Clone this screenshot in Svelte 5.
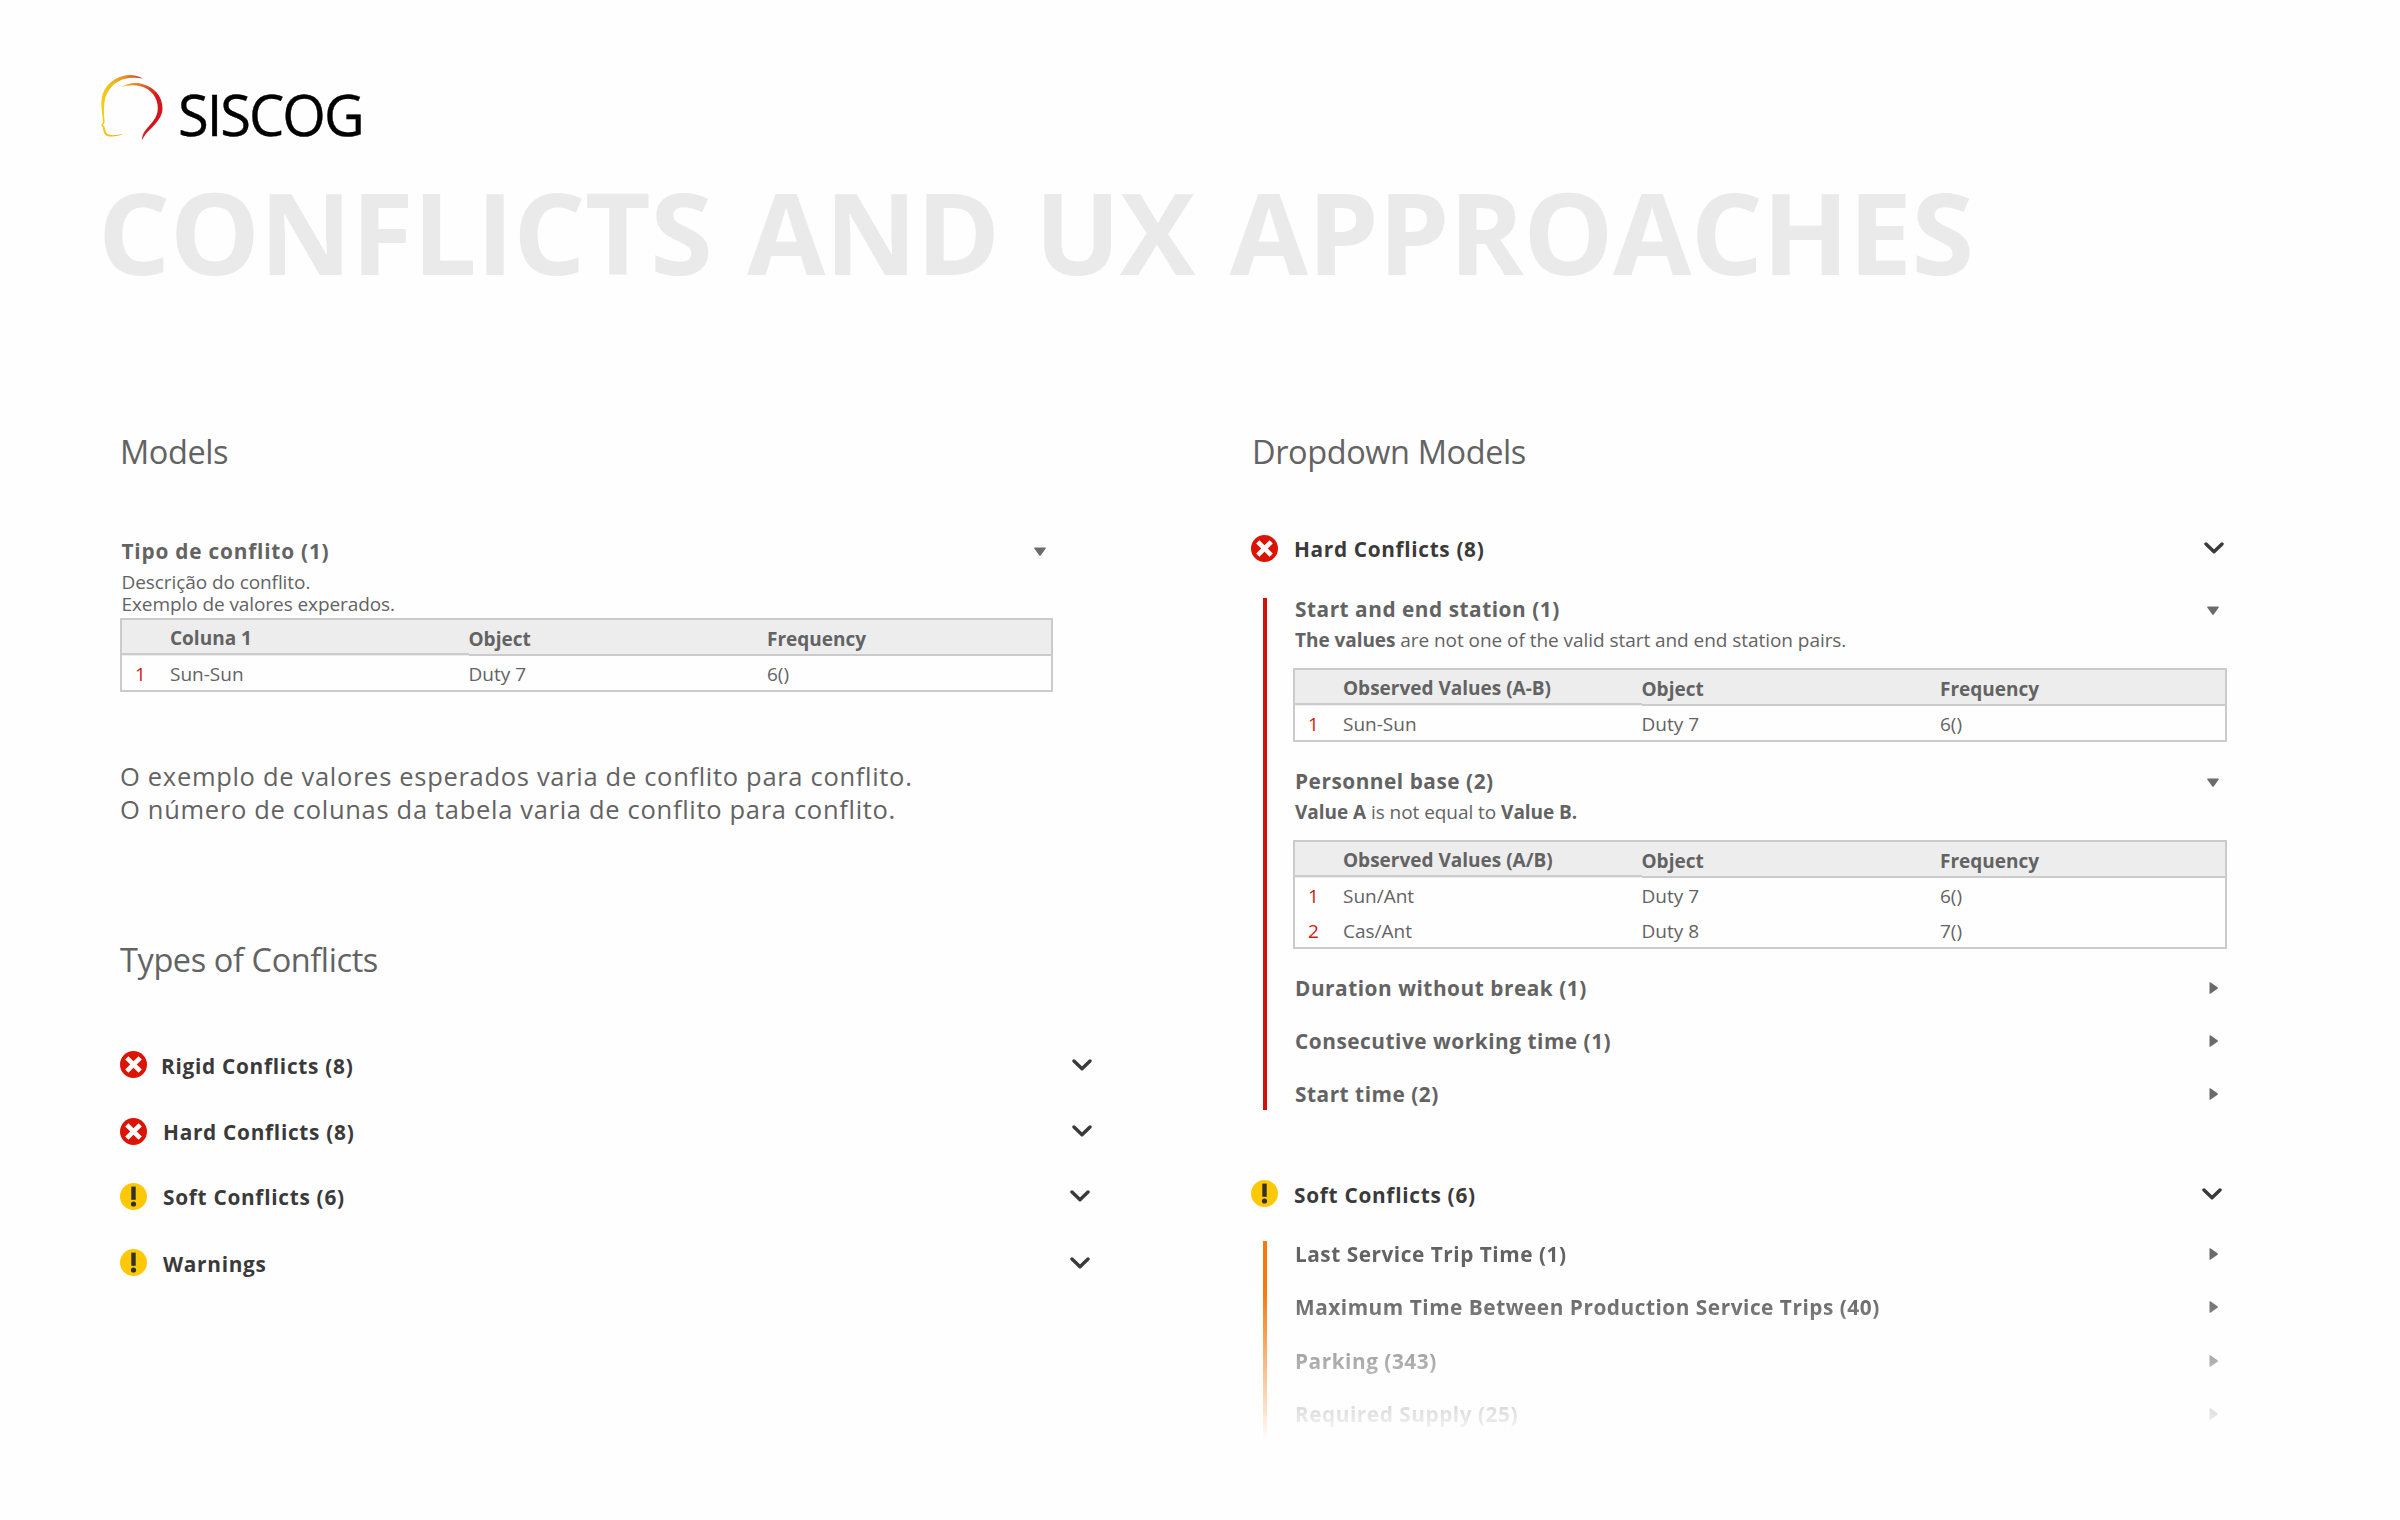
<script>
  const frequencyCols = (first) => [first, "Object", "Frequency"];

  const model = {
    columns: frequencyCols("Coluna 1"),
    rows: [["Sun-Sun", "Duty 7", "6()"]],
  };

  const types = [
    { kind: "error", name: "Rigid Conflicts (8)", tight: true },
    { kind: "error", name: "Hard Conflicts (8)" },
    { kind: "warning", name: "Soft Conflicts (6)" },
    { kind: "warning", name: "Warnings" },
  ];

  const groups = [
    {
      kind: "error",
      name: "Hard Conflicts (8)",
      items: [
        {
          name: "Start and end station (1)",
          text: [
            { b: true, t: "The values" },
            { t: " are not one of the valid start and end station pairs." },
          ],
          table: {
            columns: frequencyCols("Observed Values (A-B)"),
            rows: [["Sun-Sun", "Duty 7", "6()"]],
          },
        },
        {
          name: "Personnel base (2)",
          text: [
            { b: true, t: "Value A" },
            { t: " is not equal to " },
            { b: true, t: "Value B." },
          ],
          table: {
            columns: frequencyCols("Observed Values (A/B)"),
            rows: [
              ["Sun/Ant", "Duty 7", "6()"],
              ["Cas/Ant", "Duty 8", "7()"],
            ],
          },
        },
        { name: "Duration without break (1)" },
        { name: "Consecutive working time (1)" },
        { name: "Start time (2)" },
      ],
    },
    {
      kind: "warning",
      name: "Soft Conflicts (6)",
      items: [
        { name: "Last Service Trip Time (1)" },
        { name: "Maximum Time Between Production Service Trips (40)" },
        { name: "Parking (343)" },
        { name: "Required Supply (25)" },
      ],
    },
  ];
</script>

{#snippet badge(kind)}
  <svg class="badge" viewBox="0 0 27 27">
    {#if kind === "error"}
      <circle cx="13.5" cy="13.5" r="13.5" fill="#dc1405" />
      <path d="M6.8 6.8L20.2 20.2M20.2 6.8L6.8 20.2" stroke="#fff" stroke-width="4.6" />
    {:else}
      <circle cx="13.5" cy="13.5" r="13.5" fill="#fdc806" />
      <rect x="11.3" y="3.6" width="4.4" height="13.2" fill="#33322a" />
      <circle cx="13.5" cy="21" r="2.6" fill="#33322a" />
    {/if}
  </svg>
{/snippet}

{#snippet chevron()}
  <svg class="chevron" viewBox="0 0 20 12">
    <path d="M2 2L10 9.8L18 2" />
  </svg>
{/snippet}

{#snippet caret(open)}
  <svg class="caret" class:open viewBox="0 0 12 12">
    {#if open}
      <path d="M.8 1.6H11.2Q12.2 1.6 11.7 2.5L6.7 9.6Q6 10.5 5.3 9.6L.3 2.5Q-.2 1.6 .8 1.6Z" />
    {:else}
      <path d="M2.5 .8V11.2Q2.5 12.2 3.4 11.7L10.5 6.7Q11.4 6 10.5 5.3L3.4 .3Q2.5 -.2 2.5 .8Z" />
    {/if}
  </svg>
{/snippet}

{#snippet table(data)}
  <div class="table">
    <div class="row head">
      <span class="first"></span>
      {#each data.columns as col, i}
        <span class:first={i === 0}>{col}</span>
      {/each}
    </div>
    {#each data.rows as row, i}
      <div class="row">
        <span class="num">{i + 1}</span>
        {#each row as cell}
          <span>{cell}</span>
        {/each}
      </div>
    {/each}
  </div>
{/snippet}

<div class="page">
  <header>
    <div class="logo">
      <svg class="logo-mark" viewBox="0 0 62 66">
        <defs>
          <linearGradient id="face" x1="0" y1="0" x2="1" y2="0">
            <stop offset="0" stop-color="#f3cf10" />
            <stop offset="0.3" stop-color="#f0b41c" />
            <stop offset="0.7" stop-color="#e0752a" />
            <stop offset="1" stop-color="#cf2a25" />
          </linearGradient>
          <linearGradient id="hair" x1="0" y1="0" x2="1" y2="0.35">
            <stop offset="0" stop-color="#efc51c" />
            <stop offset="0.45" stop-color="#e0702a" />
            <stop offset="0.85" stop-color="#d5151e" />
            <stop offset="1" stop-color="#d5151e" />
          </linearGradient>
        </defs>
        <path
          fill="url(#face)"
          d="M42 3.6C36 .2 29 -.8 22 1C9 4.6 .8 14 .4 27C.2 34 1.4 40 2.2 46.4C1.8 48.5 .2 49.4 .4 50.4C.6 51.4 1.8 51.7 1.8 52.6C2.3 55 2.3 57 4 59.4C6.5 62.4 15 62 22.4 58.8C16 60.3 9 61 6 58.6C4 56.5 4.5 54 3.4 51.6C2.8 50.6 1.8 50.4 2.1 49.7C3 48.5 4 47.5 3.5 45C2.7 39 2.8 33 3.4 27.5C5 15.5 13 6.6 24 3.8C30 2.4 36 2.4 42 3.6Z"
        />
        <path
          fill="url(#hair)"
          d="M19.5 12.6C25 9 32 7 39 8.4C53 11.3 61.8 21 61.5 34C61.2 42 55 48.5 49 54.5C45 58.5 43 61 41.2 65.2C40.6 62 42 58 45 54.5C50 48.5 56.6 43 56.8 33.5C57 22.5 50 14 39.5 11.2C32 9.5 25 10.5 19.5 12.6Z"
        />
      </svg>
      <span class="logo-name">SISCOG</span>
    </div>
    <h1>CONFLICTS AND UX APPROACHES</h1>
  </header>

  <main>
    <section class="left">
      <h2>Models</h2>
      <div class="model">
        <div class="item-title">
          <span>Tipo de conflito (1)</span>
          {@render caret(true)}
        </div>
        <p class="desc">Descrição do conflito.<br />Exemplo de valores experados.</p>
        {@render table(model)}
      </div>

      <p class="note">
        O exemplo de valores esperados varia de conflito para conflito.<br />
        O número de colunas da tabela varia de conflito para conflito.
      </p>

      <h2>Types of Conflicts</h2>
      <div class="types">
        {#each types as type}
          <div class="group-title {type.kind}" class:tight={type.tight}>
            {@render badge(type.kind)}
            <span>{type.name}</span>
            {@render chevron()}
          </div>
        {/each}
      </div>
    </section>

    <section class="right">
      <h2>Dropdown Models</h2>
      {#each groups as group}
        <div class="group {group.kind}">
          <div class="group-title {group.kind}">
            {@render badge(group.kind)}
            <span>{group.name}</span>
            {@render chevron()}
          </div>
          <div class="group-body">
            <div class="line"></div>
            <div class="items">
              {#each group.items as item}
                <div class="item" class:expanded={item.table}>
                  <div class="item-title">
                    <span>{item.name}</span>
                    {@render caret(!!item.table)}
                  </div>
                  {#if item.table}
                    <p class="desc">
                      {#each item.text as part}{#if part.b}<b>{part.t}</b>{:else}{part.t}{/if}{/each}
                    </p>
                    {@render table(item.table)}
                  {/if}
                </div>
              {/each}
            </div>
          </div>
        </div>
      {/each}
    </section>
  </main>
</div>

<style>
  :global(body) {
    background: #fefefe;
  }

  .page {
    width: 2400px;
    height: 1520px;
    box-sizing: border-box;
    padding: 75px 0 0 101px;
    overflow: hidden;
    font-family: "Open Sans", "Noto Sans", sans-serif;
    color: #636363;
  }

  h1,
  h2,
  p {
    margin: 0;
  }

  .logo {
    display: flex;
    height: 66px;
  }
  .logo-mark {
    width: 62px;
    height: 66px;
  }
  .logo-name {
    margin: 9px 0 0 15px;
    font-size: 56px;
    line-height: 60px;
    letter-spacing: -2px;
    color: #000;
    -webkit-text-stroke: 0.4px #000;
  }

  h1 {
    margin: 30px 0 0 -3px;
    font-size: 113.5px;
    line-height: 120px;
    font-weight: 700;
    letter-spacing: -0.6px;
    word-spacing: 6px;
    color: #eaeaea;
    white-space: nowrap;
  }

  main {
    display: grid;
    grid-template-columns: 1132px 976px;
    margin: 138px 0 0 19px;
  }

  h2 {
    font-size: 32.5px;
    line-height: 45px;
    height: 44px;
    font-weight: 400;
    letter-spacing: -0.4px;
  }

  .model {
    width: 933px;
    margin-top: 63px;
  }
  .model .item-title {
    line-height: 28px;
    height: 28px;
    padding-right: 7px;
    letter-spacing: 0.8px;
  }
  .model .item-title span {
    padding-top: 2px;
  }
  .model .desc {
    margin-top: 6.5px;
    letter-spacing: -0.08px;
  }
  .model .table {
    margin-top: 2.5px;
  }
  .model .item-title span,
  .model .desc {
    margin-left: 1.5px;
  }

  .item-title {
    display: flex;
    align-items: center;
    justify-content: space-between;
    padding-right: 8px;
    font-size: 20.8px;
    line-height: 22px;
    font-weight: 700;
    letter-spacing: 0.53px;
  }

  .desc {
    font-size: 19px;
    line-height: 22.3px;
    letter-spacing: -0.05px;
    white-space: nowrap;
  }
  .item .item-title span,
  .item .desc {
    margin-left: 2px;
  }

  .caret {
    width: 12px;
    height: 12px;
    fill: #6b6b6b;
  }
  .caret.open {
    position: relative;
    top: 2px;
  }

  .table {
    border: 2px solid #cbcbcb;
    font-size: 19px;
  }
  .row {
    display: grid;
    grid-template-columns: 48px 298.5px 298.5px 1fr;
    line-height: 37px;
    height: 35px;
  }
  .row:last-child {
    height: 34px;
  }
  .head {
    background: #ededed;
    font-weight: 700;
    line-height: 38px;
    height: 36px;
  }
  .head span {
    box-sizing: border-box;
    height: 36px;
    border-bottom: 2px solid #cbcbcb;
  }
  .head .first {
    height: 35px;
    line-height: 37px;
  }
  .num {
    padding-left: 13px;
    color: #d31a10;
  }

  .note {
    margin-top: 68px;
    font-size: 25.5px;
    line-height: 33.3px;
    letter-spacing: 0.69px;
    white-space: nowrap;
  }
  .note + h2 {
    margin-top: 110.5px;
  }

  .types {
    display: grid;
    grid-template-rows: 66.5px 65px 66.5px 28px;
    align-items: start;
    width: 973px;
    margin-top: 70px;
  }

  .group-title {
    display: flex;
    align-items: center;
    height: 28px;
    padding-right: 1.5px;
    font-size: 20.8px;
    line-height: 28px;
    font-weight: 700;
    letter-spacing: 0.72px;
    color: #3a3a3a;
  }
  .group-title.warning {
    padding-right: 3px;
  }
  .group-title span {
    flex: 1;
    margin-left: 16px;
    padding-top: 2px;
  }
  .group-title.tight span {
    margin-left: 14px;
  }

  .badge {
    width: 27px;
    height: 27px;
  }
  .chevron {
    width: 20px;
    height: 12px;
    fill: none;
    stroke: #3a3a3a;
    stroke-width: 3.4;
    stroke-linecap: round;
    stroke-linejoin: round;
  }

  .group.error {
    margin-top: 61px;
  }
  .group.warning {
    margin-top: 69.5px;
  }
  .right .group-title {
    margin-left: -1px;
    padding-right: 4.5px;
    letter-spacing: 0.66px;
  }
  .right .group-title.warning {
    padding-right: 6.5px;
    letter-spacing: 0.72px;
  }
  .group-body {
    display: flex;
    margin-top: 36px;
    padding-left: 11px;
  }
  .line {
    width: 3.5px;
    background: #d01208;
  }
  .items {
    display: flex;
    flex-direction: column;
    gap: 31.3px;
    width: 934px;
    margin-left: 26.5px;
    padding-bottom: 5px;
  }
  .item.expanded {
    margin-bottom: -3.3px;
  }
  .item .desc {
    margin-top: 9px;
  }
  .item .table {
    margin-top: 16.5px;
  }

  .group.warning .group-body {
    height: 199px;
    margin-top: 33px;
    mask-image: linear-gradient(#000 26%, transparent);
  }
  .group.warning .line {
    background: #f67a0c;
  }
  .group.warning .items {
    padding-top: 2.5px;
  }
</style>
